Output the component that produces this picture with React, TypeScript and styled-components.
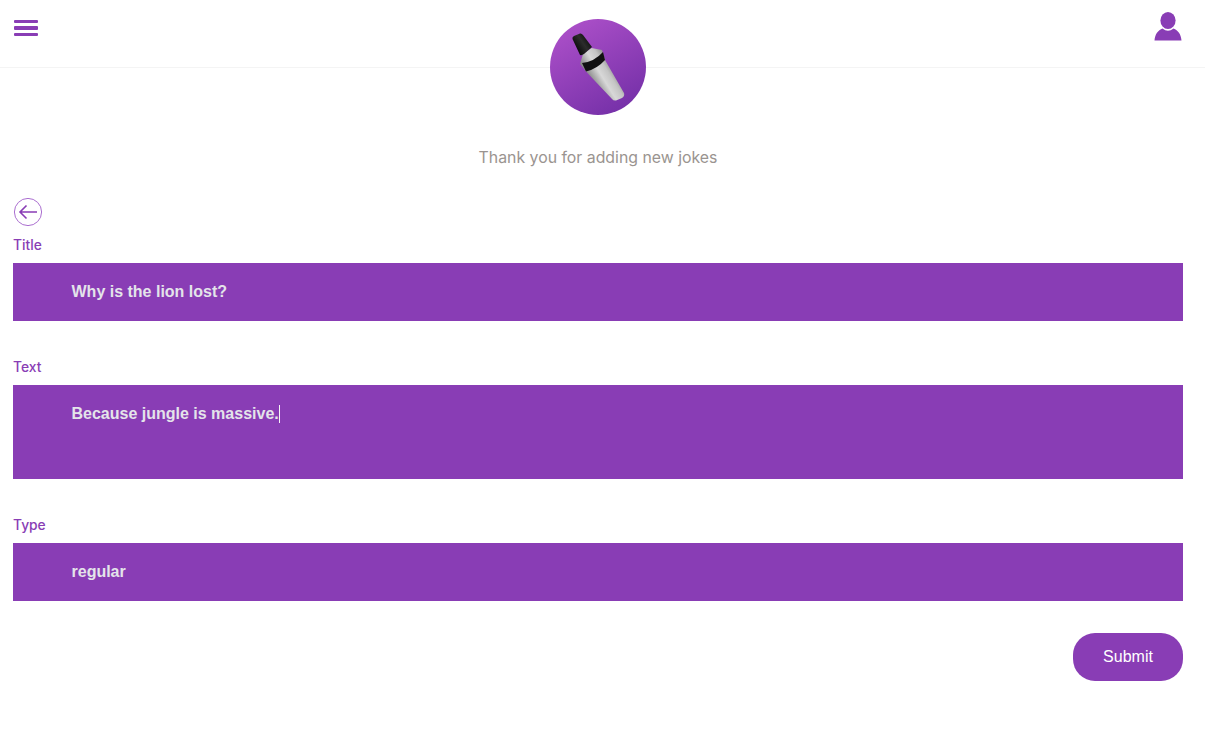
import styled, { createGlobalStyle } from "styled-components";

const purple = "#893db5";

const GlobalStyle = createGlobalStyle`
  html, body {
    margin: 0;
    background: #fff;
  }
`;

const Header = styled.header`
  position: relative;
  display: flex;
  justify-content: space-between;
  height: 67px;
  border-bottom: 1px solid #f4f4f4;
  padding: 0 23px 0 14px;
`;

const MenuButton = styled.div`
  display: flex;
  flex-direction: column;
  gap: 3px;
  width: 24px;
  padding-top: 20px;
`;

const MenuBar = styled.span`
  height: 3.4px;
  background: ${purple};
  border-radius: 1px;
`;

const UserIcon = styled.svg`
  width: 28px;
  height: 30px;
  margin-top: 11px;
`;

const LogoBadge = styled.div`
  position: absolute;
  left: 550px;
  top: 19px;
  width: 96px;
  height: 96px;
`;

const Tagline = styled.p`
  margin: 80px 0 30px;
  width: 1196px;
  text-align: center;
  font: 400 15.85px/20px Inter, sans-serif;
  color: #9a9490;
`;

const Form = styled.form`
  padding: 0 22px 0 13px;
`;

const BackIcon = styled.svg`
  display: block;
  width: 30px;
  height: 30px;
  margin: 0 0 7px 0;
`;

const Group = styled.div`
  margin-bottom: 36px;
`;

const Label = styled.div`
  height: 18px;
  margin-bottom: 10px;
  font: 500 13.8px/20px Inter, sans-serif;
  color: ${purple};
`;

const Field = styled.div<{ $tall?: boolean }>`
  height: ${(props) => (props.$tall ? "94px" : "58px")};
  box-sizing: border-box;
  padding: 18px 16px 0 58.5px;
  background: ${purple};
  font: 700 16px/21px "Liberation Sans", Arial, sans-serif;
  color: #e4e4ea;
`;

const Caret = styled.span`
  display: inline-block;
  width: 1px;
  height: 18px;
  vertical-align: -4px;
  background: #f5f5f5;
`;

const Actions = styled.div`
  display: flex;
  justify-content: flex-end;
  margin-top: -4px;
`;

const Submit = styled.button`
  width: 110px;
  height: 48px;
  border: 0;
  border-radius: 22px;
  background: ${purple};
  color: #fff;
  font: 400 16px "Liberation Sans", Arial, sans-serif;
`;

const Logo = () => (
  <svg width="96" height="96" viewBox="0 0 96 96">
    <defs>
      <linearGradient id="badge" x1="0.2" y1="0.05" x2="0.75" y2="0.98">
        <stop offset="0" stopColor="#ab4fc8" />
        <stop offset="1" stopColor="#7530a8" />
      </linearGradient>
      <linearGradient id="steel" gradientUnits="userSpaceOnUse" x1="38" y1="58" x2="64" y2="42">
        <stop offset="0" stopColor="#808080" />
        <stop offset="0.4" stopColor="#d8d8d8" />
        <stop offset="0.65" stopColor="#c4c4c4" />
        <stop offset="1" stopColor="#6f6f6f" />
      </linearGradient>
      <linearGradient id="cap" gradientUnits="userSpaceOnUse" x1="24" y1="32" x2="42" y2="20">
        <stop offset="0" stopColor="#000" />
        <stop offset="0.55" stopColor="#2c2c2c" />
        <stop offset="1" stopColor="#050505" />
      </linearGradient>
    </defs>
    <circle cx="48" cy="48" r="48" fill="url(#badge)" />
    <path
      d="M30 45 L33 35 L41.5 29 L52 31 L55 41 L74 74 Q75 77 72 79 L66 81.5 Q63.5 82 62 80 L36 52.5 Z"
      fill="url(#steel)"
    />
    <path d="M32 44 Q44 43 53 33 L55 41 Q47 50 36 52.5 Z" fill="#111" />
    <path
      d="M22.5 20 Q22 18 24 17 L30 14.5 Q31.5 14 33 16 L42 28 L34 35 Q32 36.5 30 36 Z"
      fill="url(#cap)"
    />
  </svg>
);

export default function App() {
  return (
    <>
      <GlobalStyle />
      <Header>
        <MenuButton>
          <MenuBar />
          <MenuBar />
          <MenuBar />
        </MenuButton>
        <LogoBadge>
          <Logo />
        </LogoBadge>
        <UserIcon viewBox="0 0 28 30">
          <ellipse cx="14" cy="9.5" rx="7.6" ry="8.6" fill={purple} />
          <path d="M0.5 29.5 C1 23 4 19.5 8.5 17.5 Q14 22 19.5 17.5 C24 19.5 27 23 27.5 29.5 Z" fill={purple} />
        </UserIcon>
      </Header>
      <Tagline>Thank you for adding new jokes</Tagline>
      <Form>
        <BackIcon viewBox="0 0 30 30">
          <circle cx="15" cy="14" r="13.6" fill="none" stroke="#ab6fd0" strokeWidth="1" />
          <path d="M6.5 14 H24 M13.5 7.5 L7 14 L13.5 20.5" fill="none" stroke={purple} strokeWidth="1.6" />
        </BackIcon>
        <Group>
          <Label>Title</Label>
          <Field>Why is the lion lost?</Field>
        </Group>
        <Group>
          <Label>Text</Label>
          <Field $tall>
            Because jungle is massive.
            <Caret />
          </Field>
        </Group>
        <Group>
          <Label>Type</Label>
          <Field>regular</Field>
        </Group>
        <Actions>
          <Submit type="button">Submit</Submit>
        </Actions>
      </Form>
    </>
  );
}
